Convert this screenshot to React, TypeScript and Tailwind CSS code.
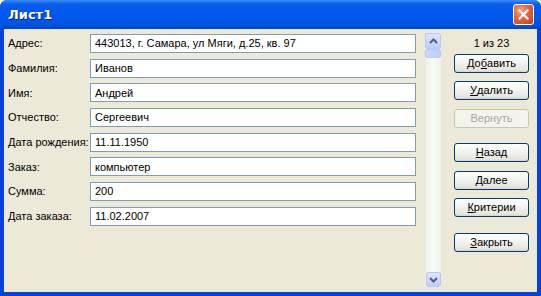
import React from "react";

const fields: [string, string][] = [
  ["Адрес:", "443013, г. Самара, ул Мяги, д.25, кв. 97"],
  ["Фамилия:", "Иванов"],
  ["Имя:", "Андрей"],
  ["Отчество:", "Сергеевич"],
  ["Дата рождения:", "11.11.1950"],
  ["Заказ:", "компьютер"],
  ["Сумма:", "200"],
  ["Дата заказа:", "11.02.2007"],
];

function XpButton({
  pre = "",
  hot = "",
  post = "",
  disabled = false,
  className = "",
}: {
  pre?: string;
  hot?: string;
  post?: string;
  disabled?: boolean;
  className?: string;
}) {
  if (disabled) {
    return (
      <div
        className={`flex h-[19px] w-[75px] items-center justify-center rounded-[3px] border border-[#C9C7BA] bg-[#F5F4EA] text-[#ACA899] ${className}`}
      >
        {pre}
        {hot}
        {post}
      </div>
    );
  }
  return (
    <div
      className={`flex h-[19px] w-[75px] items-center justify-center rounded-[3px] border border-[#003C74] bg-[linear-gradient(to_bottom,#FFFFFF_0%,#F3F3EF_45%,#E6E4DA_90%,#D6D0C5_100%)] text-black ${className}`}
    >
      {pre}
      <span className="underline underline-offset-[1px]">{hot}</span>
      {post}
    </div>
  );
}

function Chevron({ up }: { up?: boolean }) {
  return (
    <svg width="9" height="6" viewBox="0 0 9 6">
      <path
        d={up ? "M1 5 L4.5 1.5 L8 5" : "M1 1 L4.5 4.5 L8 1"}
        fill="none"
        stroke="#4D6185"
        strokeWidth="2"
      />
    </svg>
  );
}

export default function App() {
  return (
    <div
      className="flex h-[296px] w-[541px] flex-col overflow-hidden rounded-t-[7px] bg-[#0842D6] text-[11px] text-black"
      style={{ fontFamily: '"Liberation Sans", Arial, sans-serif' }}
    >
      {/* title bar */}
      <div className="flex h-[29px] shrink-0 items-center justify-between bg-[linear-gradient(to_bottom,#3D8EF9_0%,#0A5DEE_14%,#0058EE_45%,#0055E6_80%,#0047CC_100%)] pl-[8px] pr-[7px]">
        <span
          className="text-[13px] font-bold text-white [text-shadow:1px_1px_#0A1F7D]"
          style={{ fontFamily: '"DejaVu Sans", sans-serif' }}
        >
          Лист1
        </span>
        <div className="flex h-[21px] w-[21px] items-center justify-center rounded-[3px] border border-white bg-[radial-gradient(circle_at_35%_30%,#F2A48C_0%,#E2643E_45%,#C2401E_100%)]">
          <svg width="11" height="11" viewBox="0 0 11 11">
            <path d="M1.5 1.5 L9.5 9.5 M9.5 1.5 L1.5 9.5" stroke="white" strokeWidth="2.2" strokeLinecap="square" />
          </svg>
        </div>
      </div>

      {/* body */}
      <div className="mx-[4px] mb-[4px] flex flex-1 bg-[#ECE9D8]">
        <div className="flex flex-col gap-[5.7px] pl-[4px] pt-[5px]">
          {fields.map(([label, value]) => (
            <div key={label} className="flex h-[19px] items-center">
              <span className="w-[82px] shrink-0">{label}</span>
              <div className="flex h-[19px] w-[326px] items-center border border-[#7F9DB9] bg-white pl-[4px]">
                {value}
              </div>
            </div>
          ))}
        </div>

        {/* scrollbar */}
        <div className="ml-[9px] mt-[4px] flex h-[254px] w-[16px] flex-col items-center justify-between bg-[linear-gradient(to_right,#EEEDE5_0%,#FCFCFA_50%,#F3F1EC_100%)]">
          <div className="flex w-[16px] flex-col">
            <div className="flex h-[16px] w-[16px] items-center justify-center rounded-[2px] border border-[#B9CBF3] bg-[linear-gradient(to_bottom,#DCE6FD,#BCCDF8)]">
              <Chevron up />
            </div>
            <div className="h-[9px] w-[16px] rounded-[2px] border border-[#B9CBF3] bg-[linear-gradient(to_right,#CAD8FC,#BCCDF8)]" />
          </div>
          <div className="flex h-[15px] w-[15px] items-center justify-center rounded-[2px] border border-[#B9CBF3] bg-[linear-gradient(to_bottom,#DCE6FD,#BCCDF8)]">
            <Chevron />
          </div>
        </div>

        {/* right column */}
        <div className="ml-[13px] flex w-[75px] flex-col items-center pt-[7px]">
          <div className="flex h-[14px] items-center">1 из 23</div>
          <XpButton className="mt-[4px]" pre="До" hot="б" post="авить" />
          <XpButton className="mt-[8px]" hot="У" post="далить" />
          <XpButton className="mt-[9px]" pre="Вернуть" disabled />
          <XpButton className="mt-[15px]" hot="Н" post="азад" />
          <XpButton className="mt-[9px]" hot="Д" post="алее" />
          <XpButton className="mt-[8px]" hot="К" post="ритерии" />
          <XpButton className="mt-[16px]" hot="З" post="акрыть" />
        </div>
      </div>
    </div>
  );
}
